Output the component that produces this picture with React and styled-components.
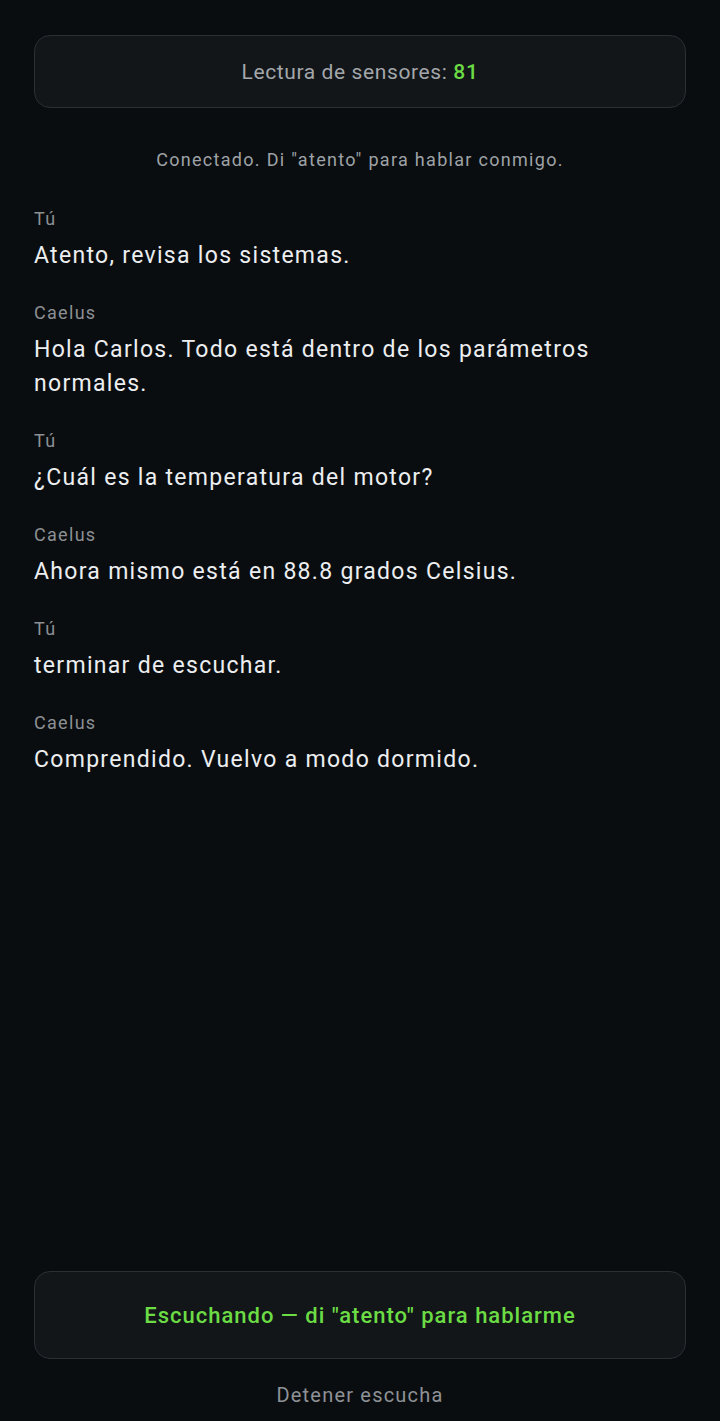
import React from 'react'
import styled, { createGlobalStyle } from 'styled-components'

const GlobalStyle = createGlobalStyle`
  html, body {
    margin: 0;
    padding: 0;
    background: #0a0d10;
  }
  * {
    box-sizing: border-box;
  }
`

const Page = styled.div`
  min-height: 100vh;
  display: flex;
  flex-direction: column;
  padding: 35px 34px 0;
  font-family: Roboto, 'Noto Sans', sans-serif;
  background: #0a0d10;
  color: #e8eaed;
`

const Panel = styled.div`
  display: flex;
  align-items: center;
  justify-content: center;
  height: ${props => props.tall ? '88px' : '73px'};
  border: 1.5px solid #2a2f34;
  border-radius: 16px;
  background: #121619;
  font-size: ${props => props.tall ? '22px' : '21px'};
  letter-spacing: ${props => props.tall ? '1px' : '0.6px'};
  font-weight: ${props => props.tall ? 500 : 400};
  color: ${props => props.tall ? '#6cdc45' : '#a3a7ab'};
`

const Value = styled.span`
  color: #6cdc45;
  font-weight: 500;
  margin-left: 6px;
`

const Status = styled.p`
  margin: 40px 0 0;
  text-align: center;
  font-size: 18px;
  line-height: 24px;
  letter-spacing: 1.3px;
  color: #9ea2a6;
`

const Log = styled.div`
  flex: 1;
  display: flex;
  flex-direction: column;
  gap: 28px;
  margin-top: 35px;
`

const Message = styled.div`
  display: flex;
  flex-direction: column;
  gap: 8px;
`

const Speaker = styled.span`
  font-size: 18px;
  line-height: 24px;
  letter-spacing: 1.3px;
  color: #8c9094;
`

const Text = styled.span`
  font-size: 23px;
  line-height: 34px;
  letter-spacing: 1.3px;
  color: #eceef0;
`

const Footer = styled.div`
  display: flex;
  flex-direction: column;
  padding-bottom: 12px;
`

const StopButton = styled.button`
  margin-top: 22px;
  background: none;
  border: none;
  font-family: inherit;
  font-size: 20px;
  line-height: 26px;
  letter-spacing: 1.2px;
  color: #8e9296;
  cursor: pointer;
`

const messages = [
  { who: 'Tú', text: 'Atento, revisa los sistemas.' },
  { who: 'Caelus', text: 'Hola Carlos. Todo está dentro de los parámetros normales.' },
  { who: 'Tú', text: '¿Cuál es la temperatura del motor?' },
  { who: 'Caelus', text: 'Ahora mismo está en 88.8 grados Celsius.' },
  { who: 'Tú', text: 'terminar de escuchar.' },
  { who: 'Caelus', text: 'Comprendido. Vuelvo a modo dormido.' },
]

export default function App() {
  return (
    <>
      <GlobalStyle />
      <Page>
        <Panel>
          Lectura de sensores:<Value>81</Value>
        </Panel>
        <Status>Conectado. Di "atento" para hablar conmigo.</Status>
        <Log>
          {messages.map((m, i) => (
            <Message key={i}>
              <Speaker>{m.who}</Speaker>
              <Text>{m.text}</Text>
            </Message>
          ))}
        </Log>
        <Footer>
          <Panel tall>Escuchando — di "atento" para hablarme</Panel>
          <StopButton>Detener escucha</StopButton>
        </Footer>
      </Page>
    </>
  )
}
